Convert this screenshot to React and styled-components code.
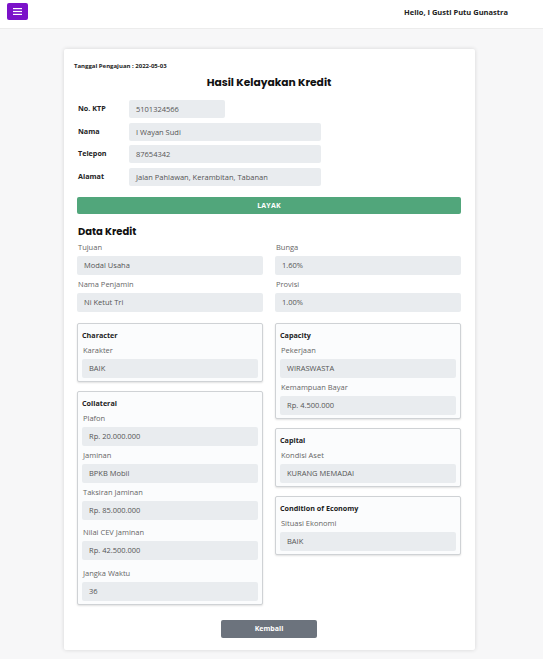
import React from "react";
import styled, { createGlobalStyle } from "styled-components";

const GlobalStyle = createGlobalStyle`
  body {
    margin: 0;
    background: #f7f7f8;
    font-family: "Open Sans", "Liberation Sans", sans-serif;
    color: #333;
  }
`;

const Header = styled.header`
  height: 29px;
  background: #fff;
  border-bottom: 1px solid #ececec;
  display: flex;
  align-items: center;
  justify-content: space-between;
  padding: 0 35px 0 7px;
  box-sizing: border-box;
`;

const MenuButton = styled.button`
  width: 21px;
  height: 17px;
  margin-top: -6px;
  border: none;
  border-radius: 2px;
  background: #7b12c9;
  display: flex;
  align-items: center;
  justify-content: center;
  padding: 0;
`;

const Greeting = styled.span`
  font-size: 7.5px;
  font-weight: 700;
  color: #222;
  margin-top: -5px;
`;

const Main = styled.main`
  padding: 20px 0 8px;
`;

const Card = styled.section`
  width: 411px;
  margin-left: 64px;
  background: #fff;
  box-shadow: 0 0 4px rgba(0, 0, 0, 0.14);
  border-radius: 2px;
  padding: 13px 14px 12px 13px;
  box-sizing: border-box;
`;

const DateLine = styled.div`
  font-size: 6px;
  font-weight: 700;
  color: #222;
  margin-left: -3px;
  line-height: 8px;
`;

const Title = styled.h2`
  font-family: "Poppins", "Inter", "Noto Sans", sans-serif;
  font-size: 10.7px;
  font-weight: 700;
  text-align: center;
  margin: 6px 0 10px;
  color: #111;
  line-height: 14px;
`;

const InfoRows = styled.div`
  display: flex;
  flex-direction: column;
  gap: 4.5px;
`;

const InfoRow = styled.div`
  display: grid;
  grid-template-columns: 52px auto;
  align-items: start;
`;

const InfoLabel = styled.span`
  font-size: 7.2px;
  font-weight: 700;
  color: #222;
  padding-left: 1px;
  padding-top: 3px;
`;

const Value = styled.div`
  background: #e9ecef;
  border-radius: 2px;
  height: ${(p) => p.$h || 19}px;
  width: ${(p) => (p.$w ? `${p.$w}px` : "auto")};
  box-sizing: border-box;
  padding-left: 7px;
  display: flex;
  align-items: center;
  font-size: 7.5px;
  color: #555;
  white-space: nowrap;
`;

const StatusBar = styled.div`
  margin-top: 11px;
  height: 17px;
  border-radius: 2px;
  background: #51a67b;
  color: #fff;
  font-size: 7px;
  font-weight: 700;
  display: flex;
  align-items: center;
  justify-content: center;
  letter-spacing: 0.2px;
`;

const SectionTitle = styled.h3`
  font-family: "Poppins", "Inter", "Noto Sans", sans-serif;
  font-size: 10px;
  font-weight: 700;
  color: #111;
  margin: 11px 0 4px 1px;
  line-height: 13px;
`;

const TwoCols = styled.div`
  display: grid;
  grid-template-columns: 186px 186px;
  column-gap: 12px;
  align-items: start;
  margin-top: ${(p) => p.$top || 0}px;
`;

const Column = styled.div`
  display: flex;
  flex-direction: column;
  gap: ${(p) => p.$gap || 0}px;
`;

const FieldLabel = styled.div`
  font-size: 7.5px;
  color: #666;
  line-height: 11px;
  margin-top: ${(p) => p.$top ?? 4}px;
  margin-bottom: 3px;
  padding-left: 1px;
`;

const Box = styled.div`
  border: 1px solid #cfd2d5;
  border-radius: 2px;
  background: #fbfcfd;
  box-shadow: 0 1px 2px rgba(0, 0, 0, 0.12);
  padding: 6px 4px 3px;
`;

const BoxTitle = styled.div`
  font-size: 7.2px;
  font-weight: 700;
  color: #222;
  line-height: 11px;
`;

const Footer = styled.div`
  display: flex;
  justify-content: center;
  margin-top: 15px;
`;

const BackButton = styled.button`
  width: 96px;
  height: 18px;
  border: none;
  border-radius: 2px;
  background: #6c737d;
  color: #fff;
  font-family: inherit;
  font-size: 7px;
  font-weight: 700;
`;

const Field = ({ label, value, top }) => (
  <>
    <FieldLabel $top={top}>{label}</FieldLabel>
    <Value>{value}</Value>
  </>
);

const App = () => (
  <>
    <GlobalStyle />
    <Header>
      <MenuButton>
        <svg width="9" height="7" viewBox="0 0 9 7">
          <rect x="0" y="0" width="9" height="1.2" fill="#fff" />
          <rect x="0" y="2.9" width="9" height="1.2" fill="#fff" />
          <rect x="0" y="5.8" width="9" height="1.2" fill="#fff" />
        </svg>
      </MenuButton>
      <Greeting>Hello, I Gusti Putu Gunastra</Greeting>
    </Header>
    <Main>
      <Card>
        <DateLine>Tanggal Pengajuan : 2022-05-03</DateLine>
        <Title>Hasil Kelayakan Kredit</Title>
        <InfoRows>
          <InfoRow>
            <InfoLabel>No. KTP</InfoLabel>
            <Value $h={18} $w={96}>5101324566</Value>
          </InfoRow>
          <InfoRow>
            <InfoLabel>Nama</InfoLabel>
            <Value $h={18} $w={192}>I Wayan Sudi</Value>
          </InfoRow>
          <InfoRow>
            <InfoLabel>Telepon</InfoLabel>
            <Value $h={18} $w={192}>87654342</Value>
          </InfoRow>
          <InfoRow>
            <InfoLabel>Alamat</InfoLabel>
            <Value $h={18} $w={192}>Jalan Pahlawan, Kerambitan, Tabanan</Value>
          </InfoRow>
        </InfoRows>
        <StatusBar>LAYAK</StatusBar>
        <SectionTitle>Data Kredit</SectionTitle>
        <TwoCols>
          <Column>
            <Field label="Tujuan" value="Modal Usaha" top={0} />
            <Field label="Nama Penjamin" value="Ni Ketut Tri" />
          </Column>
          <Column>
            <Field label="Bunga" value="1.60%" top={0} />
            <Field label="Provisi" value="1.00%" />
          </Column>
        </TwoCols>
        <TwoCols $top={11}>
          <Column $gap={9}>
            <Box>
              <BoxTitle>Character</BoxTitle>
              <Field label="Karakter" value="BAIK" />
            </Box>
            <Box>
              <BoxTitle>Collateral</BoxTitle>
              <Field label="Plafon" value="Rp. 20.000.000" />
              <Field label="Jaminan" value="BPKB Mobil" />
              <Field label="Taksiran Jaminan" value="Rp. 85.000.000" />
              <Field label="Nilai CEV Jaminan" value="Rp. 42.500.000" top={7} />
              <Field label="Jangka Waktu" value="36" top={8} />
            </Box>
          </Column>
          <Column $gap={9}>
            <Box>
              <BoxTitle>Capacity</BoxTitle>
              <Field label="Pekerjaan" value="WIRASWASTA" />
              <Field label="Kemampuan Bayar" value="Rp. 4.500.000" />
            </Box>
            <Box>
              <BoxTitle>Capital</BoxTitle>
              <Field label="Kondisi Aset" value="KURANG MEMADAI" />
            </Box>
            <Box>
              <BoxTitle>Condition of Economy</BoxTitle>
              <Field label="Situasi Ekonomi" value="BAIK" />
            </Box>
          </Column>
        </TwoCols>
        <Footer>
          <BackButton>Kembali</BackButton>
        </Footer>
      </Card>
    </Main>
  </>
);

export default App;
